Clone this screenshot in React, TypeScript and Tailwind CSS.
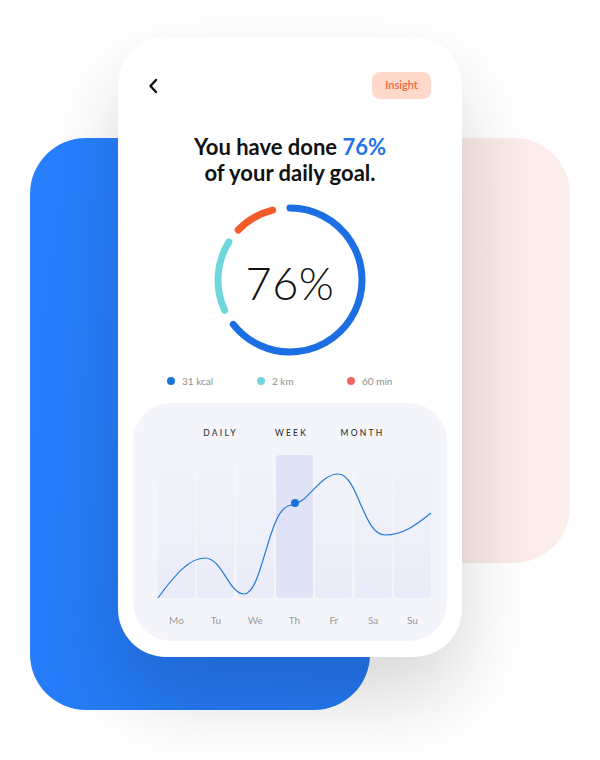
import React from "react";

const CX = 76;
const CY = 76;
const R = 72;

function arc(from: number, to: number) {
  const rad = (a: number) => (a * Math.PI) / 180;
  const x1 = CX + R * Math.cos(rad(from));
  const y1 = CY + R * Math.sin(rad(from));
  const x2 = CX + R * Math.cos(rad(to));
  const y2 = CY + R * Math.sin(rad(to));
  const large = to - from > 180 ? 1 : 0;
  return `M${x1.toFixed(2)} ${y1.toFixed(2)} A${R} ${R} 0 ${large} 1 ${x2.toFixed(2)} ${y2.toFixed(2)}`;
}

const days = ["Mo", "Tu", "We", "Th", "Fr", "Sa", "Su"];

const legend = [
  { label: "31 kcal", dot: "bg-[#1b72dc]" },
  { label: "2 km", dot: "bg-[#72d4dc]" },
  { label: "60 min", dot: "bg-[#ee6662]" },
];

function Ring() {
  return (
    <div className="relative mx-auto w-[152px] h-[152px]">
      <svg width="152" height="152" viewBox="0 0 152 152" fill="none">
        <path d={arc(-90, 142)} stroke="#1b6fe3" strokeWidth="7" strokeLinecap="round" />
        <path d={arc(155, 212)} stroke="#6fd7dc" strokeWidth="7" strokeLinecap="round" />
        <path d={arc(224, 256)} stroke="#f35b2b" strokeWidth="7" strokeLinecap="round" />
      </svg>
      <div className="absolute inset-0 flex items-center justify-center pt-[8px]">
        <span className="text-[45px] font-light text-[#111] tracking-[0.5px]">76%</span>
      </div>
    </div>
  );
}

function Chart() {
  return (
    <div className="mx-[15px] mt-[15px] rounded-[38px] bg-[#f4f5fa] pt-[24px] pb-[14px] pl-[25px] pr-[16px]">
      <div className="mr-[6px] flex justify-center text-[8.5px] font-medium tracking-[0.26em] text-[#333] leading-[12px]">
        <div className="w-[71px] text-center">DAILY</div>
        <div className="w-[71px] text-center">WEEK</div>
        <div className="w-[71px] text-center">MONTH</div>
      </div>
      <div className="relative mt-[16px] h-[143px] w-[273px]">
        <div className="flex h-full items-end gap-[2.3px]">
          {days.map((d) => (
            <div
              key={d}
              className={
                d === "Th"
                  ? "h-[143px] flex-1 rounded-[4px] bg-[#e0e3f5]"
                  : "h-[136px] flex-1 rounded-[4px] bg-gradient-to-b from-[#f3f4fa] to-[#e9ebf8]"
              }
            />
          ))}
        </div>
        <svg
          className="absolute inset-0 overflow-visible"
          width="273"
          height="143"
          viewBox="0 0 273 143"
          fill="none"
        >
          <path
            d="M0 143 C18 118 32 103 47 103 C64 103 71 139 86 139 C104 139 110 58 130 51 C136 49 140 49 146 44 C160 31 168 19 180 19 C200 19 205 80 227 80 C245 80 258 70 273 58"
            stroke="#2079d9"
            strokeWidth="1.2"
          />
          <circle cx="137" cy="48" r="4" fill="#1a72d8" />
        </svg>
      </div>
      <div className="mt-[15px] flex w-[273px] gap-[2.3px] text-[10px] leading-[14px] text-[#9a9a9a]">
        {days.map((d) => (
          <div key={d} className="flex-1 text-center">
            {d}
          </div>
        ))}
      </div>
    </div>
  );
}

export default function App() {
  return (
    <div className="relative w-[600px] h-[760px] overflow-hidden bg-white font-['Lato',sans-serif]">
      {/* decorative backdrop cards */}
      <div className="absolute left-[30px] top-[138px] w-[340px] h-[572px] rounded-[56px] bg-gradient-to-br from-[#2880ff] to-[#2478f2]" />
      <div className="absolute left-[300px] top-[138px] w-[270px] h-[425px] rounded-[56px] bg-gradient-to-r from-[#f3e1de] to-[#fdefec]" />

      {/* phone */}
      <div className="relative z-10 ml-[118px] mt-[37px] w-[344px] h-[620px] rounded-[48px] bg-white shadow-[0_40px_80px_rgba(0,0,0,0.16)]">
        <div className="flex items-center justify-between pl-[30px] pr-[31px] pt-[35px]">
          <svg width="10" height="16" viewBox="0 0 10 16" fill="none">
            <path d="M8 2 L2.5 8 L8 14" stroke="#111" strokeWidth="2.4" strokeLinecap="round" strokeLinejoin="round" />
          </svg>
          <div className="flex h-[27px] w-[59px] items-center justify-center rounded-[8px] bg-[#fdd8cb] text-[11px] font-semibold text-[#f2673c]">
            Insight
          </div>
        </div>

        <h1 className="mt-[35px] text-center text-[22px] font-bold leading-[26px] text-[#111]">
          You have done <span className="text-[#1f73e6]">76%</span>
          <br />
          of your daily goal.
        </h1>

        <div className="mt-[18px]">
          <Ring />
        </div>

        <div className="mt-[18px] ml-[49px] flex text-[10px] leading-[14px] text-[#8e8e8e]">
          {legend.map((l) => (
            <div key={l.label} className="flex w-[90px] items-center gap-[7px]">
              <span className={`h-[8px] w-[8px] rounded-full ${l.dot}`} />
              <span>{l.label}</span>
            </div>
          ))}
        </div>

        <Chart />
      </div>
    </div>
  );
}
